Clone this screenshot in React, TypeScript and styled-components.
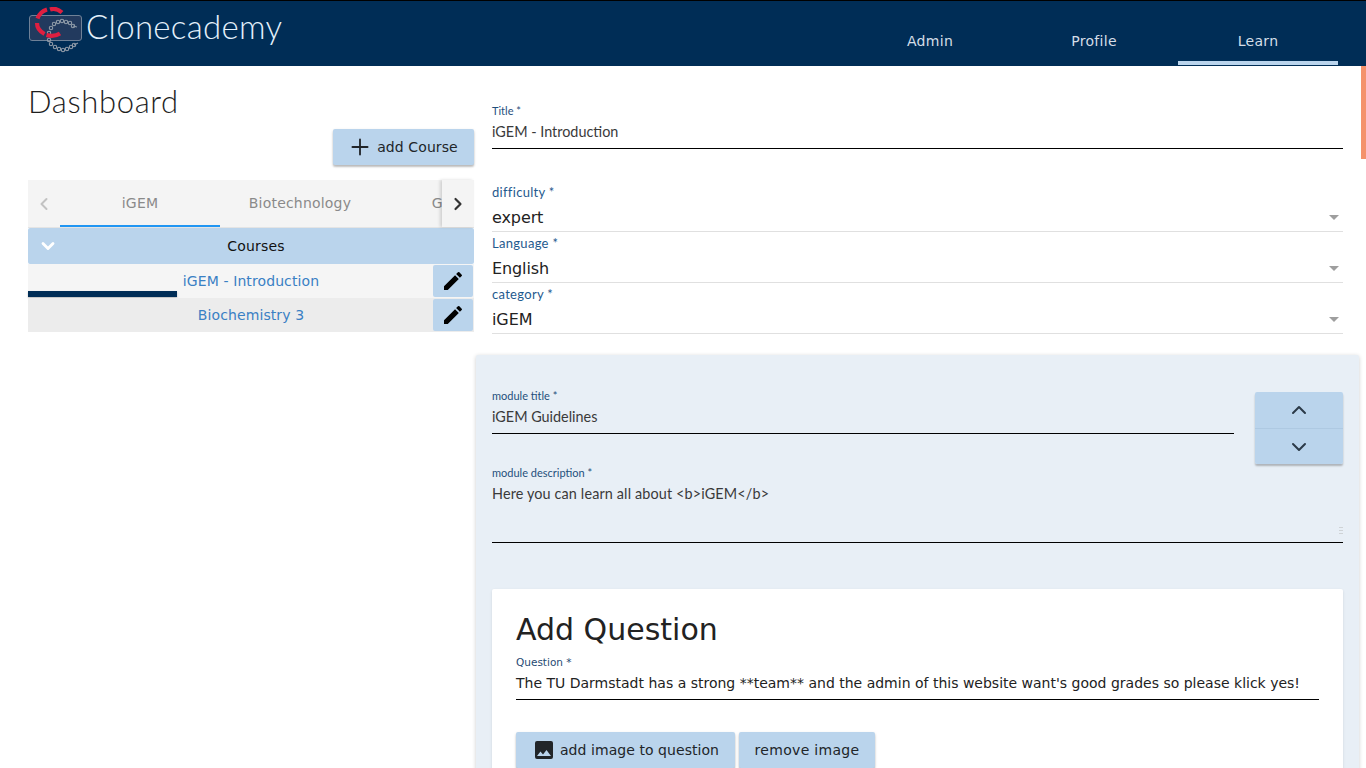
import React from 'react';
import styled, { createGlobalStyle } from 'styled-components';
import { ChevronDown, ChevronLeft, ChevronRight, ChevronUp, Plus } from 'lucide-react';

const GlobalStyle = createGlobalStyle`
  html, body {
    margin: 0;
    height: 768px;
    overflow: hidden;
    background: #ffffff;
    font-family: "DejaVu Sans", sans-serif;
  }
`;

const raleway = `Lato, "Open Sans", sans-serif`;

const Page = styled.div`
  position: relative;
  width: 1366px;
  height: 768px;
  overflow: hidden;
`;

const Header = styled.header`
  display: flex;
  justify-content: space-between;
  height: 66px;
  box-sizing: border-box;
  border-top: 1px solid #000000;
  background: #002d56;
  padding: 0 28px;
`;

const Brand = styled.div`
  display: flex;
  align-items: flex-start;
  padding-top: 6px;
`;

const BrandName = styled.span`
  margin: -1px 0 0 2px;
  font-family: ${raleway};
  font-weight: 300;
  font-size: 33px;
  line-height: 41px;
  letter-spacing: 0.3px;
  color: #e3f0fb;
`;

const Nav = styled.nav`
  display: flex;
  align-items: stretch;
`;

const NavItem = styled.div<{ $active?: boolean }>`
  width: 160px;
  margin-left: 4px;
  height: 64px;
  box-sizing: border-box;
  padding-top: 31px;
  text-align: center;
  font-size: 14px;
  line-height: 18px;
  letter-spacing: 0.3px;
  color: #d5dee7;
  border-bottom: 4px solid ${p => (p.$active ? '#bad4ec' : 'transparent')};
`;

// the orange thumb of the custom scrollbar sits over the page
const Scroll = styled.div`
  position: absolute;
  top: 66px;
  right: 0;
  width: 5px;
  height: 93px;
  background: #f4926c;
`;

const Main = styled.main`
  display: flex;
  padding-left: 28px;
`;

const Side = styled.aside`
  width: 446px;
  flex-shrink: 0;
`;

const Heading = styled.h1`
  margin: 0;
  padding-top: 18px;
  height: 45px;
  font-family: ${raleway};
  font-weight: 300;
  font-size: 31px;
  line-height: 34px;
  letter-spacing: 0.65px;
  color: #1f1f1f;
`;

const SideActions = styled.div`
  display: flex;
  justify-content: flex-end;
`;

const Button = styled.button`
  display: inline-flex;
  align-items: center;
  justify-content: center;
  box-sizing: border-box;
  border: 0;
  border-radius: 2px;
  background: #bad4ec;
  color: #212529;
  font-family: "DejaVu Sans", sans-serif;
  font-size: 14px;
  letter-spacing: 0.1px;
  box-shadow: 0 2px 2px rgba(0, 0, 0, 0.2), 0 1px 3px rgba(0, 0, 0, 0.12);
  padding: 0;
`;

const AddCourse = styled(Button)`
  width: 141px;
  height: 36px;
  gap: 4px;
  padding-right: 2px;
`;

const Tabs = styled.div`
  display: flex;
  height: 47px;
  margin-top: 15px;
  background: #f4f4f4;
  border-bottom: 1px solid #e4e4e4;
`;

const TabArrow = styled.div<{ $muted?: boolean; $raised?: boolean }>`
  width: 32px;
  display: flex;
  align-items: center;
  justify-content: center;
  flex-shrink: 0;
  color: ${p => (p.$muted ? '#c2c2c2' : '#333333')};
  box-shadow: ${p => (p.$raised ? '-2px 0 3px rgba(0, 0, 0, 0.15)' : 'none')};
`;

const TabStrip = styled.div`
  flex: 1;
  display: flex;
  overflow: hidden;
`;

const Tab = styled.div<{ $active?: boolean }>`
  width: 160px;
  flex-shrink: 0;
  height: 47px;
  box-sizing: border-box;
  line-height: 46px;
  text-align: center;
  font-size: 14px;
  letter-spacing: 0.2px;
  color: #8a8a8a;
  border-bottom: 2px solid ${p => (p.$active ? '#2196f3' : 'transparent')};
`;

const CoursesHead = styled.div`
  display: flex;
  align-items: center;
  height: 36px;
  border-radius: 2px;
  background: #bad4ec;
  color: #111111;
  font-size: 14px;
  letter-spacing: 0.2px;
`;

const CoursesToggle = styled.div`
  width: 40px;
  display: flex;
  justify-content: center;
  color: #ffffff;
`;

const CoursesLabel = styled.div`
  flex: 1;
  text-align: center;
  padding-right: 30px;
`;

const CourseRow = styled.div<{ $alt?: boolean }>`
  position: relative;
  display: flex;
  align-items: center;
  height: 34px;
  background: ${p => (p.$alt ? '#ececec' : '#f5f5f5')};
`;

const CourseName = styled.div`
  flex: 1;
  padding-left: 41px;
  text-align: center;
  color: #3a80c4;
  font-size: 14px;
  letter-spacing: 0.1px;
`;

const Progress = styled.div`
  position: absolute;
  left: 0;
  bottom: 1px;
  height: 6px;
  background: #002d56;
  box-shadow: 0 1px 2px rgba(0, 0, 0, 0.25);
`;

const EditButton = styled.div`
  width: 40px;
  height: 32px;
  margin-right: 1px;
  display: flex;
  align-items: center;
  justify-content: center;
  border-radius: 2px;
  background: #bad4ec;
`;

const Content = styled.section`
  width: 887px;
  flex-shrink: 0;
  box-sizing: border-box;
  padding: 0 2px;
`;

const CourseForm = styled.div`
  padding: 38px 16px 0;
`;

const Field = styled.div<{ $w?: string }>`
  display: flex;
  flex-direction: column;
  width: ${p => p.$w ?? '100%'};
`;

const SmallLabel = styled.label`
  font-family: ${raleway};
  font-size: 11px;
  line-height: 14px;
  color: #1f4f7c;
`;

const TextValue = styled.div`
  font-family: ${raleway};
  font-size: 14.4px;
  line-height: 20px;
  color: #3a3a3a;
  margin-top: 4px;
  padding-bottom: 6px;
  border-bottom: 1px solid #000000;
`;

const SelectField = styled.div`
  display: flex;
  flex-direction: column;
  height: 48px;
  margin-bottom: 3px;
  box-sizing: border-box;
  border-bottom: 1px solid #e0e0e0;
`;

const SelectLabel = styled.label`
  font-family: ${raleway};
  font-size: 13px;
  line-height: 16px;
  letter-spacing: 0.3px;
  color: #1f5a8e;
`;

const SelectRow = styled.div`
  display: flex;
  justify-content: space-between;
  align-items: center;
  margin-top: 5px;
  height: 24px;
  font-size: 16px;
  letter-spacing: -0.1px;
  color: #222222;
`;

const Caret = styled.span`
  width: 0;
  height: 0;
  margin-right: 4px;
  border-left: 5px solid transparent;
  border-right: 5px solid transparent;
  border-top: 5px solid #9e9e9e;
`;

const Selects = styled.div`
  margin-top: 35px;
`;

const ModulePanel = styled.div`
  margin-top: 21px;
  padding: 34px 16px 0;
  height: 420px;
  background: #e8eff6;
  border-radius: 2px;
  box-shadow: 0 1px 4px rgba(0, 0, 0, 0.2);
`;

const ModuleTop = styled.div`
  display: flex;
  justify-content: space-between;
`;

const Stepper = styled.div`
  display: flex;
  flex-direction: column;
  width: 88px;
  height: 72px;
  margin-top: 3px;
  border-radius: 2px;
  overflow: hidden;
  box-shadow: 0 2px 2px rgba(0, 0, 0, 0.25);
`;

const StepButton = styled.div<{ $lower?: boolean }>`
  height: 36px;
  box-sizing: border-box;
  display: flex;
  align-items: center;
  justify-content: center;
  background: #bad4ec;
  color: #2b3a48;
  border-top: ${p => (p.$lower ? '1px solid #aec9e2' : '0')};
`;

const AreaField = styled.div`
  margin-top: -2px;
`;

const AreaValue = styled.div`
  position: relative;
  height: 58px;
  margin-top: 3px;
  font-family: ${raleway};
  font-size: 14.4px;
  line-height: 20px;
  letter-spacing: 0.14px;
  color: #3a3a3a;
  border-bottom: 1px solid #000000;
`;

const Grip = styled.span`
  position: absolute;
  right: 0;
  bottom: 7px;
  width: 4px;
  height: 8px;
  background: repeating-linear-gradient(to bottom, #cfd3d6 0 1px, transparent 1px 3px);
`;

const QuestionCard = styled.div`
  margin-top: 46px;
  padding: 23px 24px 0;
  height: 300px;
  background: #ffffff;
  border-radius: 2px;
  box-shadow: 0 1px 3px rgba(0, 0, 0, 0.1);
`;

const CardTitle = styled.h2`
  margin: 0;
  font-weight: 400;
  font-size: 30px;
  line-height: 36px;
  color: #222222;
`;

const QuestionLabel = styled.label`
  display: block;
  margin-top: 7px;
  font-size: 10.5px;
  line-height: 14px;
  color: #1f4a73;
`;

const QuestionValue = styled.div`
  margin-top: 4px;
  padding-bottom: 6px;
  font-size: 14px;
  line-height: 20px;
  white-space: nowrap;
  color: #222222;
  border-bottom: 1px solid #000000;
`;

const CardActions = styled.div`
  display: flex;
  gap: 4px;
  margin-top: 32px;
`;

const ImageButton = styled(Button)`
  height: 36px;
  width: 219px;
  gap: 4px;
  letter-spacing: 0.06px;
`;

const RemoveButton = styled(Button)`
  height: 36px;
  width: 136px;
  letter-spacing: 0.3px;
`;

const Pencil = () => (
  <svg width="24" height="24" viewBox="0 0 24 24" fill="#000000">
    <path d="M3 17.25V21h3.75L17.81 9.94l-3.75-3.75L3 17.25zM20.71 7.04a1 1 0 0 0 0-1.41l-2.34-2.34a1 1 0 0 0-1.41 0l-1.83 1.83 3.75 3.75 1.83-1.83z" />
  </svg>
);

const ImageIcon = () => (
  <svg width="24" height="24" viewBox="0 0 24 24" fill="#212529">
    <path d="M21 19V5a2 2 0 0 0-2-2H5a2 2 0 0 0-2 2v14a2 2 0 0 0 2 2h14a2 2 0 0 0 2-2zM8.5 13.5l2.5 3.01L14.5 12l4.5 6H5l3.5-4.5z" />
  </svg>
);

// beads of the DNA strand in the logo
const dnaBeads: [number, number][] = [
  [21, 26], [23, 21], [26, 17], [30, 15], [34, 14], [38, 15], [42, 16], [45, 19],
  [21, 33], [23, 37], [27, 40], [31, 42], [35, 43], [39, 42], [43, 40], [46, 38],
];

const Logo = () => (
  <svg width="56" height="54" viewBox="0 0 56 54" fill="none">
    <rect x="1.5" y="8.5" width="52" height="25" rx="2.5" fill="#223a5e" stroke="#6f8197" strokeWidth="1" />
    <g stroke="#8f9ba8" strokeWidth="1.1">
      {dnaBeads.map(([cx, cy]) => (
        <circle key={`${cx}-${cy}`} cx={cx} cy={cy} r="1.7" />
      ))}
      <path d="M45 19l4 1M46 38l4-2" />
    </g>
    <g stroke="#df1f40" strokeWidth="4.2">
      <path d="M22 2.5c4-1.500 8-.5 12 3" />
      <path d="M9.500 11.500c1.500-4 4.500-7.500 9.500-9" />
      <path d="M9 16c0 4.500 3 8.500 7.500 11" />
      <path d="M18.500 28c5 1.500 9.500 1 13.500-1.500" />
    </g>
  </svg>
);

export default function App() {
  return (
    <Page>
      <GlobalStyle />
      <Header>
        <Brand>
          <Logo />
          <BrandName>Clonecademy</BrandName>
        </Brand>
        <Nav>
          <NavItem>Admin</NavItem>
          <NavItem>Profile</NavItem>
          <NavItem $active>Learn</NavItem>
        </Nav>
      </Header>
      <Scroll />
      <Main>
        <Side>
          <Heading>Dashboard</Heading>
          <SideActions>
            <AddCourse>
              <Plus size={26} strokeWidth={1.7} />
              add Course
            </AddCourse>
          </SideActions>
          <Tabs>
            <TabArrow $muted>
              <ChevronLeft size={20} strokeWidth={2.4} />
            </TabArrow>
            <TabStrip>
              <Tab $active>iGEM</Tab>
              <Tab>Biotechnology</Tab>
              <Tab>General</Tab>
            </TabStrip>
            <TabArrow $raised>
              <ChevronRight size={20} strokeWidth={2.6} />
            </TabArrow>
          </Tabs>
          <CoursesHead>
            <CoursesToggle>
              <ChevronDown size={20} strokeWidth={3.4} />
            </CoursesToggle>
            <CoursesLabel>Courses</CoursesLabel>
          </CoursesHead>
          <CourseRow>
            <CourseName>iGEM - Introduction</CourseName>
            <EditButton>
              <Pencil />
            </EditButton>
            <Progress style={{ width: `${(149 / 446) * 100}%` }} />
          </CourseRow>
          <CourseRow $alt>
            <CourseName>Biochemistry 3</CourseName>
            <EditButton>
              <Pencil />
            </EditButton>
          </CourseRow>
        </Side>
        <Content>
          <CourseForm>
            <Field>
              <SmallLabel>Title *</SmallLabel>
              <TextValue>iGEM - Introduction</TextValue>
            </Field>
            <Selects>
              <SelectField>
                <SelectLabel>difficulty *</SelectLabel>
                <SelectRow>
                  expert
                  <Caret />
                </SelectRow>
              </SelectField>
              <SelectField>
                <SelectLabel>Language *</SelectLabel>
                <SelectRow>
                  English
                  <Caret />
                </SelectRow>
              </SelectField>
              <SelectField>
                <SelectLabel>category *</SelectLabel>
                <SelectRow>
                  iGEM
                  <Caret />
                </SelectRow>
              </SelectField>
            </Selects>
          </CourseForm>
          <ModulePanel>
            <ModuleTop>
              <Field $w="742px">
                <SmallLabel>module title *</SmallLabel>
                <TextValue>iGEM Guidelines</TextValue>
              </Field>
              <Stepper>
                <StepButton>
                  <ChevronUp size={24} strokeWidth={2} />
                </StepButton>
                <StepButton $lower>
                  <ChevronDown size={24} strokeWidth={2} />
                </StepButton>
              </Stepper>
            </ModuleTop>
            <AreaField>
              <SmallLabel>module description *</SmallLabel>
              <AreaValue>
                Here you can learn all about &lt;b&gt;iGEM&lt;/b&gt;
                <Grip />
              </AreaValue>
            </AreaField>
            <QuestionCard>
              <CardTitle>Add Question</CardTitle>
              <QuestionLabel>Question *</QuestionLabel>
              <QuestionValue>
                The TU Darmstadt has a strong **team** and the admin of this website want's good grades so please klick yes!
              </QuestionValue>
              <CardActions>
                <ImageButton>
                  <ImageIcon />
                  add image to question
                </ImageButton>
                <RemoveButton>remove image</RemoveButton>
              </CardActions>
            </QuestionCard>
          </ModulePanel>
        </Content>
      </Main>
    </Page>
  );
}
